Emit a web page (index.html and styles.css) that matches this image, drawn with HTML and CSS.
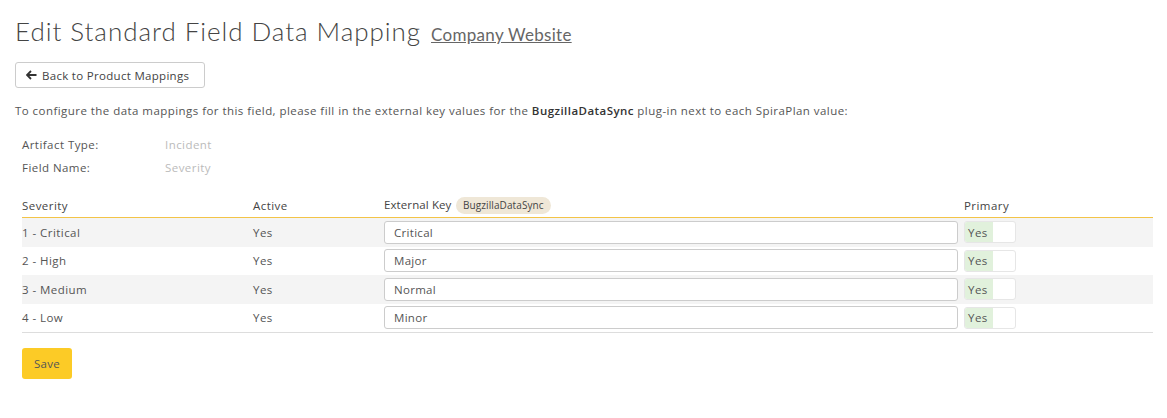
FILE: index.html
```html
<!DOCTYPE html>
<html>
<head>
<meta charset="utf-8">
<link rel="stylesheet" href="styles.css">
</head>
<body>
<div class="page">
  <h1 class="title">Edit Standard Field Data Mapping <a class="product-link" href="#">Company Website</a></h1>
  <button class="btn btn-back" type="button">
    <svg class="arrow" width="11" height="10" viewBox="0 0 11 10"><path d="M5 1 L1 5 L5 9 M1 5 H10.5" fill="none" stroke="#333" stroke-width="1.8"/></svg>
    Back to Product Mappings
  </button>
  <p class="intro">To configure the data mappings for this field, please fill in the external key values for the <b>BugzillaDataSync</b> plug-in next to each SpiraPlan value:</p>
  <div class="meta">
    <span class="meta-label">Artifact Type:</span><span class="meta-value">Incident</span>
    <span class="meta-label">Field Name:</span><span class="meta-value">Severity</span>
  </div>
  <table class="mapping">
    <thead>
      <tr>
        <th class="c-sev">Severity</th>
        <th class="c-act">Active</th>
        <th class="c-key"><span class="key-label">External Key</span> <span class="badge">BugzillaDataSync</span></th>
        <th class="c-pri">Primary</th>
      </tr>
    </thead>
    <tbody>
      <tr class="odd">
        <td>1 - Critical</td><td>Yes</td>
        <td><input class="key-input" type="text" value="Critical"></td>
        <td><span class="toggle"><span class="toggle-on">Yes</span></span></td>
      </tr>
      <tr>
        <td>2 - High</td><td>Yes</td>
        <td><input class="key-input" type="text" value="Major"></td>
        <td><span class="toggle"><span class="toggle-on">Yes</span></span></td>
      </tr>
      <tr class="odd">
        <td>3 - Medium</td><td>Yes</td>
        <td><input class="key-input" type="text" value="Normal"></td>
        <td><span class="toggle"><span class="toggle-on">Yes</span></span></td>
      </tr>
      <tr>
        <td>4 - Low</td><td>Yes</td>
        <td><input class="key-input" type="text" value="Minor"></td>
        <td><span class="toggle"><span class="toggle-on">Yes</span></span></td>
      </tr>
    </tbody>
  </table>
  <button class="btn btn-save" type="button">Save</button>
</div>
</body>
</html>
```

FILE: styles.css
```css
html, body {
  margin: 0;
  padding: 0;
  background: #fff;
}
body {
  font-family: "Open Sans", "Liberation Sans", sans-serif;
  font-size: 11.5px;
  letter-spacing: 0.45px;
  color: #555;
}
.page {
  padding: 13px 15px 0 15px;
}
.title {
  margin: 0;
  font-family: "Lato", "Liberation Sans", sans-serif;
  font-weight: 300;
  font-size: 26px;
  line-height: 36px;
  color: #444;
  letter-spacing: 0.95px;
}
.product-link {
  font-size: 17px;
  font-weight: 400;
  color: #666;
  text-decoration: underline;
  letter-spacing: 0.3px;
  margin-left: 2px;
}
.btn {
  font-family: "Open Sans", "Liberation Sans", sans-serif;
  font-size: 11.5px;
  letter-spacing: 0.3px;
  color: #444;
  border-radius: 3px;
  cursor: pointer;
}
.btn-back {
  display: flex;
  align-items: center;
  gap: 5px;
  margin-top: 9px;
  height: 26px;
  width: 190px;
  padding: 0 10px;
  background: #fff;
  border: 1px solid #ccc;
}
.arrow { flex: none; }
.intro {
  margin: 13px 0 0 0;
  line-height: 20px;
  color: #555;
}
.intro b {
  font-weight: 600;
  color: #333;
}
.meta {
  display: grid;
  grid-template-columns: 143px auto;
  row-gap: 3px;
  margin: 14px 0 0 7px;
  line-height: 20px;
}
.meta-value { color: #bbb; }
.mapping {
  margin: 16px 0 0 7px;
  width: 1131px;
  border-collapse: collapse;
  table-layout: fixed;
}
.mapping th {
  text-align: left;
  font-weight: 400;
  color: #444;
  height: 23px;
  padding: 0;
  vertical-align: middle;
  border-bottom: 1px solid #f3c447;
}
.key-label { letter-spacing: 0.1px; }
.c-sev { width: 231px; }
.c-act { width: 131px; }
.c-key { width: 580px; }
.c-pri { width: 189px; }
.badge {
  display: inline-block;
  background: #efe7d7;
  color: #444;
  font-size: 10px;
  letter-spacing: 0.1px;
  line-height: 17px;
  padding: 0 7px;
  border-radius: 9px;
  margin-left: 1px;
}
.mapping td {
  padding: 0;
  height: 28.5px;
  vertical-align: middle;
  color: #555;
}
.mapping tr.odd td { background: #f4f4f4; }
.mapping tbody tr:last-child td { border-bottom: 1px solid #ddd; }
.key-input {
  box-sizing: border-box;
  display: block;
  width: 574px;
  height: 23px;
  border: 1px solid #ccc;
  border-radius: 3px;
  padding: 0 9px;
  font-family: "Open Sans", "Liberation Sans", sans-serif;
  font-size: 11.5px;
  letter-spacing: 0.3px;
  color: #555;
  background: #fff;
}
.toggle {
  display: flex;
  width: 52px;
  height: 22px;
  box-sizing: border-box;
  border: 1px solid #e6e6e6;
  border-radius: 3px;
  background: #fff;
  overflow: hidden;
}
.toggle-on {
  width: 25px;
  background: #e1f1dc;
  display: flex;
  align-items: center;
  padding-left: 3px;
  color: #555;
}
.btn-save {
  display: block;
  margin: 15px 0 0 7px;
  width: 50px;
  height: 31px;
  border: none;
  background: #fccb26;
  color: #555;
}
```
